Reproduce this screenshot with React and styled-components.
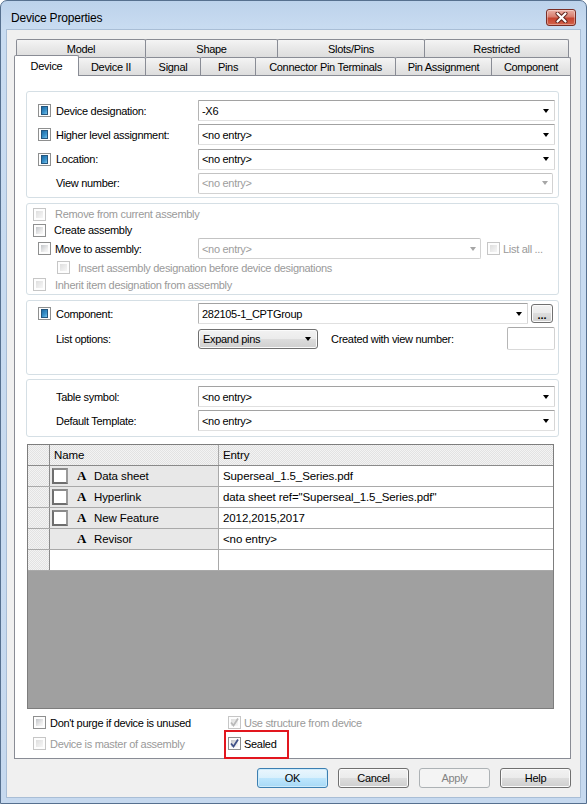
import React from "react";
import styled, { createGlobalStyle, css } from "styled-components";

const GlobalStyle = createGlobalStyle`
  html, body {
    margin: 0;
    padding: 0;
    background: #ffffff;
  }
  body {
    font-family: "Liberation Sans", Arial, sans-serif;
    font-size: 11px;
    letter-spacing: -0.3px;
    color: #000;
  }
  * {
    box-sizing: border-box;
  }
`;

const dither = css`
  background: repeating-conic-gradient(#e2e2e2 0 25%, #f3f3f3 0 50%) 0 0 / 2px 2px;
`;

const Window = styled.div`
  width: 587px;
  height: 804px;
  display: flex;
  flex-direction: column;
  padding: 0 6px 6px 6px;
  border: 1px solid #56708f;
  border-radius: 7px 7px 0 0;
  background: linear-gradient(#bcd2eb, #c9dcf1 28px, #c6d9ef);
`;

const TitleBar = styled.div`
  height: 29px;
  display: flex;
  align-items: center;
  justify-content: space-between;
  padding: 0 4px;
`;

const Title = styled.div`
  font-size: 12px;
  letter-spacing: -0.2px;
  padding-top: 4px;
`;

const CloseButton = styled.div`
  width: 30px;
  height: 17px;
  margin-top: 4px;
  display: flex;
  align-items: center;
  justify-content: center;
  border: 1px solid #7a2e26;
  border-radius: 3px;
  background: linear-gradient(#eab1a6, #d77d6e 45%, #c5432f 55%, #d3644c);
  box-shadow: inset 0 0 0 1px rgba(255, 255, 255, 0.35);
`;

const Client = styled.div`
  flex: 1;
  display: flex;
  flex-direction: column;
  padding: 9px 9px 9px 7px;
  background: #f0f0f0;
  box-shadow: 0 0 0 1px #a9bed6;
`;

const TabRow = styled.div`
  display: flex;
  align-items: flex-start;
  padding-left: 2px;
  height: 18px;
`;

const Tab = styled.div`
  width: ${(p) => p.$w}px;
  height: 18px;
  margin-left: ${(p) => (p.$first ? 0 : -1)}px;
  display: flex;
  align-items: center;
  justify-content: center;
  white-space: nowrap;
  border: 1px solid #898c95;
  border-bottom: none;
  border-radius: 2px 2px 0 0;
  background: linear-gradient(#f4f4f4, #e8e8e8 50%, #dddddd);
  ${(p) =>
    p.$active &&
    css`
      position: relative;
      z-index: 2;
      width: ${p.$w + 4}px;
      height: 21px;
      margin: -2px -2px -1px ${p.$first ? -2 : -3}px;
      padding-bottom: 1px;
      background: #ffffff;
    `}
`;

const Panel = styled.div`
  position: relative;
  z-index: 1;
  flex: 1;
  display: flex;
  flex-direction: column;
  padding: 15px 11px 0 11px;
  background: #ffffff;
  border: 1px solid #898c95;
`;

const Group = styled.div`
  height: ${(p) => p.$h}px;
  margin-top: ${(p) => p.$mt || 0}px;
  padding: ${(p) => p.$pt}px 3px 0 6px;
  border: 1px solid #d5dfe5;
  border-radius: 3px;
  display: flex;
  flex-direction: column;
  gap: ${(p) => p.$gap || 0}px;
`;

const FieldRow = styled.div`
  display: grid;
  grid-template-columns: ${(p) => p.$cols || "23px 142px 1fr"};
  align-items: center;
  height: 21px;
`;

const Label = styled.span`
  white-space: nowrap;
  color: ${(p) => (p.$disabled ? "#9a9a9a" : "#000")};
`;

const Combo = styled.div`
  height: 21px;
  display: flex;
  align-items: center;
  padding-left: 3px;
  margin-right: ${(p) => p.$mr || 0}px;
  background: #ffffff;
  border: 1px solid;
  border-color: ${(p) =>
    p.$disabled ? "#c3c3c3 #d2d2d2 #d2d2d2 #c3c3c3" : "#a2a2a2 #d6d6d6 #e0e0e0 #b4b4b4"};
  border-radius: ${(p) => (p.$disabled ? 2 : 1)}px;
  color: ${(p) => (p.$disabled ? "#9d9d9d" : "#000")};
`;

const ComboText = styled.span`
  flex: 1;
  white-space: nowrap;
  overflow: hidden;
`;

const Arrow = styled.span`
  width: 0;
  height: 0;
  flex: none;
  margin-right: ${(p) => p.$mr || 5}px;
  border-left: 3.5px solid transparent;
  border-right: 3.5px solid transparent;
  border-top: 4px solid ${(p) => (p.$disabled ? "#a6a6a6" : "#000")};
`;

const CheckBox = styled.span`
  width: 13px;
  height: 13px;
  flex: none;
  display: inline-flex;
  align-items: center;
  justify-content: center;
  padding: 2px;
  border: 1px solid ${(p) => (p.$disabled ? "#c6c6c6" : "#8e8f8f")};
  background: #fdfdfd;
  visibility: ${(p) => (p.$hidden ? "hidden" : "visible")};
  &::before {
    content: "";
    width: 7px;
    height: 7px;
    ${(p) =>
      p.$blue
        ? css`
            border: 1px solid #24567e;
            background: linear-gradient(135deg, #1c6aa3, #3b93cc 60%, #79c4ea);
          `
        : p.$disabled
        ? css`
            background: linear-gradient(135deg, #dedede, #f6f6f6);
          `
        : css`
            background: linear-gradient(135deg, #c2c5c9, #eeeeee 70%, #f8f8f8);
          `}
  }
`;

const CheckMark = styled.svg`
  position: absolute;
  width: 11px;
  height: 11px;
`;

const CheckWrap = styled.span`
  position: relative;
  display: inline-flex;
  align-items: center;
  justify-content: center;
  flex: none;
`;

function Check({ blue, disabled, checked, hidden }) {
  return (
    <CheckWrap>
      <CheckBox $blue={blue} $disabled={disabled} $hidden={hidden} />
      {checked && (
        <CheckMark viewBox="0 0 11 11">
          <path
            d="M2 5.5 L4.5 8.5 L9 1.5"
            fill="none"
            stroke={disabled ? "#b9b9b9" : "#3f5188"}
            strokeWidth="1.8"
          />
        </CheckMark>
      )}
    </CheckWrap>
  );
}

const CheckRow = styled.div`
  display: flex;
  align-items: center;
  height: ${(p) => p.$h}px;
  padding-left: ${(p) => p.$indent || 0}px;
`;

const CheckLabel = styled.span`
  margin-left: ${(p) => p.$gap}px;
  white-space: nowrap;
  color: ${(p) => (p.$disabled ? "#9a9a9a" : "#000")};
`;

const ListAll = styled.div`
  display: flex;
  align-items: center;
  margin-left: 6px;
`;

const buttonFace = css`
  border: 1px solid #707070;
  border-radius: 3px;
  background: linear-gradient(#f2f2f2, #ebebeb 50%, #dddddd 50%, #cfcfcf);
  box-shadow: inset 0 0 0 1px #fbfbfb;
`;

const DotsButton = styled.div`
  ${buttonFace};
  width: 22px;
  height: 19px;
  margin-left: 3px;
  display: flex;
  align-items: flex-end;
  justify-content: center;
  padding-bottom: 3px;
  font-weight: bold;
  letter-spacing: 0;
  line-height: 8px;
`;

const OptionsRow = styled.div`
  display: flex;
  align-items: center;
  height: 23px;
  margin-top: 3px;
  padding-left: 23px;
`;

const OptionsLabel = styled.span`
  width: ${(p) => (p.$w ? `${p.$w}px` : "auto")};
  flex: ${(p) => (p.$w ? "none" : 1)};
  margin-left: ${(p) => p.$ml || 0}px;
  white-space: nowrap;
`;

const DropButton = styled.div`
  ${buttonFace};
  width: 120px;
  height: 20px;
  display: flex;
  align-items: center;
  padding-left: 4px;
`;

const SmallBox = styled.div`
  width: 48px;
  height: 23px;
  background: #ffffff;
  border: 1px solid;
  border-color: #a8a8a8 #d2d2d2 #d9d9d9 #b6b6b6;
  border-radius: 2px;
`;

const Table = styled.div`
  height: 265px;
  margin: 7px 5px 0 1px;
  border: 1px solid #7d7d7d;
  display: flex;
  flex-direction: column;
  font-size: 11.5px;
  letter-spacing: -0.1px;
`;

const TRow = styled.div`
  display: grid;
  grid-template-columns: 22px 169px 1fr;
  height: 21px;
  flex: none;
  border-bottom: 1px solid ${(p) => (p.$head ? "#8a8a8a" : "#a9a9a9")};
`;

const RowHead = styled.div`
  ${dither};
  border-right: 1px solid #8a8a8a;
`;

const HeadCell = styled.div`
  ${dither};
  display: flex;
  align-items: center;
  padding-left: 4px;
  border-right: ${(p) => (p.$last ? "none" : "1px solid #a9a9a9")};
`;

const NameCell = styled.div`
  display: flex;
  align-items: center;
  padding-left: 2px;
  background: ${(p) => (p.$blank ? "#ffffff" : "#e8e8e8")};
  border-right: 1px solid #a9a9a9;
`;

const EntryCell = styled.div`
  display: flex;
  align-items: center;
  padding-left: 4px;
  background: #ffffff;
  white-space: nowrap;
`;

const AttrBox = styled.span`
  width: 16px;
  height: 16px;
  flex: none;
  border: 2px solid #6e6e6e;
  border-top-color: #8a8a8a;
  border-right-color: #9a9a9a;
  background: #ffffff;
  visibility: ${(p) => (p.$hidden ? "hidden" : "visible")};
`;

const AttrGlyph = styled.span`
  margin-left: 9px;
  width: 17px;
  flex: none;
  font-family: "Liberation Serif", "Times New Roman", serif;
  font-weight: bold;
  font-size: 13px;
  letter-spacing: 0;
`;

const GrayArea = styled.div`
  flex: 1;
  background: #a0a0a0;
`;

const BottomChecks = styled.div`
  display: grid;
  grid-template-columns: 195px auto;
  grid-auto-rows: 21px;
  margin-top: 3px;
  padding-left: 7px;
`;

const Marked = styled.div`
  position: relative;
  display: flex;
  align-items: center;
  &::after {
    content: "";
    position: absolute;
    left: -4px;
    top: -3px;
    width: 61px;
    height: 25px;
    border: 2px solid #e2161e;
  }
`;

const ButtonRow = styled.div`
  display: flex;
  justify-content: flex-end;
  gap: 10px;
  margin-top: 9px;
`;

const Button = styled.div`
  width: 71px;
  height: 20px;
  display: flex;
  align-items: center;
  justify-content: center;
  ${buttonFace};
  ${(p) =>
    p.$default &&
    css`
      border-color: #3c7fb1;
      background: linear-gradient(#eaf6fd, #d9f0fc 50%, #bee6fd 50%, #a7d9f5);
      box-shadow: inset 0 0 0 1px #cdebfb;
    `}
  ${(p) =>
    p.$disabled &&
    css`
      border-color: #adb2b5;
      background: #f4f4f4;
      box-shadow: none;
      color: #838383;
    `}
`;

const topTabs = [
  { label: "Model", w: 130 },
  { label: "Shape", w: 133 },
  { label: "Slots/Pins", w: 148 },
  { label: "Restricted", w: 145 },
];

const frontTabs = [
  { label: "Device", w: 61, active: true },
  { label: "Device II", w: 70 },
  { label: "Signal", w: 56 },
  { label: "Pins", w: 56 },
  { label: "Connector Pin Terminals", w: 141 },
  { label: "Pin Assignment", w: 97 },
  { label: "Component", w: 80 },
];

const designationFields = [
  { label: "Device designation:", value: "-X6", blue: true },
  { label: "Higher level assignment:", value: "<no entry>", blue: true },
  { label: "Location:", value: "<no entry>", blue: true },
  { label: "View number:", value: "<no entry>", disabled: true },
];

const attributes = [
  { name: "Data sheet", entry: "Superseal_1.5_Series.pdf", box: true },
  { name: "Hyperlink", entry: 'data sheet ref="Superseal_1.5_Series.pdf"', box: true },
  { name: "New Feature", entry: "2012,2015,2017", box: true },
  { name: "Revisor", entry: "<no entry>", box: false },
];

function Field({ label, value, blue, disabled }) {
  return (
    <FieldRow>
      {blue ? <Check blue /> : <span />}
      <Label>{label}</Label>
      <Combo $disabled={disabled} $mr={disabled ? 2 : 0}>
        <ComboText>{value}</ComboText>
        <Arrow $disabled={disabled} $mr={disabled ? 4 : 5} />
      </Combo>
    </FieldRow>
  );
}

export default function App() {
  return (
    <>
      <GlobalStyle />
      <Window>
        <TitleBar>
          <Title>Device Properties</Title>
          <CloseButton>
            <svg width="13" height="11" viewBox="0 0 13 11">
              <path d="M2.5 1.5 L10.5 9.5 M10.5 1.5 L2.5 9.5" stroke="#5d2019" strokeWidth="4" strokeLinecap="round" />
              <path d="M2.5 1.5 L10.5 9.5 M10.5 1.5 L2.5 9.5" stroke="#ffffff" strokeWidth="2.2" strokeLinecap="round" />
            </svg>
          </CloseButton>
        </TitleBar>

        <Client>
          <TabRow>
            {topTabs.map((t, i) => (
              <Tab key={t.label} $w={t.w} $first={i === 0}>
                {t.label}
              </Tab>
            ))}
          </TabRow>
          <TabRow>
            {frontTabs.map((t, i) => (
              <Tab key={t.label} $w={t.w} $first={i === 0} $active={t.active}>
                {t.label}
              </Tab>
            ))}
          </TabRow>

          <Panel>
            <Group $h={107} $pt={8} $gap={3.33}>
              {designationFields.map((f) => (
                <Field key={f.label} {...f} />
              ))}
            </Group>

            <Group $h={92} $pt={2} $mt={5}>
              <CheckRow $h={16}>
                <Check disabled />
                <CheckLabel $gap={9} $disabled>
                  Remove from current assembly
                </CheckLabel>
              </CheckRow>
              <CheckRow $h={16}>
                <Check />
                <CheckLabel $gap={8}>Create assembly</CheckLabel>
              </CheckRow>
              <FieldRow $cols="22px 143px 283px auto">
                <Check />
                <Label>Move to assembly:</Label>
                <Combo $disabled>
                  <ComboText>{"<no entry>"}</ComboText>
                  <Arrow $disabled $mr={4} />
                </Combo>
                <ListAll>
                  <Check disabled />
                  <CheckLabel $gap={3} $disabled>
                    List all ...
                  </CheckLabel>
                </ListAll>
              </FieldRow>
              <CheckRow $h={17} $indent={24}>
                <Check disabled />
                <CheckLabel $gap={8} $disabled>
                  Insert assembly designation before device designations
                </CheckLabel>
              </CheckRow>
              <CheckRow $h={17}>
                <Check disabled />
                <CheckLabel $gap={9} $disabled>
                  Inherit item designation from assembly
                </CheckLabel>
              </CheckRow>
            </Group>

            <Group $h={75} $pt={2} $mt={5}>
              <FieldRow $cols="23px 142px 330px 25px">
                <Check blue />
                <Label>Component:</Label>
                <Combo>
                  <ComboText>282105-1_CPTGroup</ComboText>
                  <Arrow />
                </Combo>
                <DotsButton>...</DotsButton>
              </FieldRow>
              <OptionsRow>
                <OptionsLabel $w={142}>List options:</OptionsLabel>
                <DropButton>
                  <ComboText>Expand pins</ComboText>
                  <Arrow $mr={6} />
                </DropButton>
                <OptionsLabel $ml={13}>Created with view number:</OptionsLabel>
                <SmallBox />
              </OptionsRow>
            </Group>

            <Group $h={58} $pt={6} $mt={4} $gap={3}>
              <Field label="Table symbol:" value="<no entry>" />
              <Field label="Default Template:" value="<no entry>" />
            </Group>

            <Table>
              <TRow $head>
                <RowHead />
                <HeadCell>Name</HeadCell>
                <HeadCell $last>Entry</HeadCell>
              </TRow>
              {attributes.map((a) => (
                <TRow key={a.name}>
                  <RowHead />
                  <NameCell>
                    <AttrBox $hidden={!a.box} />
                    <AttrGlyph>A</AttrGlyph>
                    {a.name}
                  </NameCell>
                  <EntryCell>{a.entry}</EntryCell>
                </TRow>
              ))}
              <TRow>
                <RowHead />
                <NameCell $blank />
                <EntryCell />
              </TRow>
              <GrayArea />
            </Table>

            <BottomChecks>
              <CheckRow $h={21}>
                <Check />
                <CheckLabel $gap={4}>Don't purge if device is unused</CheckLabel>
              </CheckRow>
              <CheckRow $h={21}>
                <Check disabled checked />
                <CheckLabel $gap={3} $disabled>
                  Use structure from device
                </CheckLabel>
              </CheckRow>
              <CheckRow $h={21}>
                <Check disabled />
                <CheckLabel $gap={4} $disabled>
                  Device is master of assembly
                </CheckLabel>
              </CheckRow>
              <Marked>
                <Check checked />
                <CheckLabel $gap={3}>Sealed</CheckLabel>
              </Marked>
            </BottomChecks>
          </Panel>

          <ButtonRow>
            <Button $default>OK</Button>
            <Button>Cancel</Button>
            <Button $disabled>Apply</Button>
            <Button>Help</Button>
          </ButtonRow>
        </Client>
      </Window>
    </>
  );
}
